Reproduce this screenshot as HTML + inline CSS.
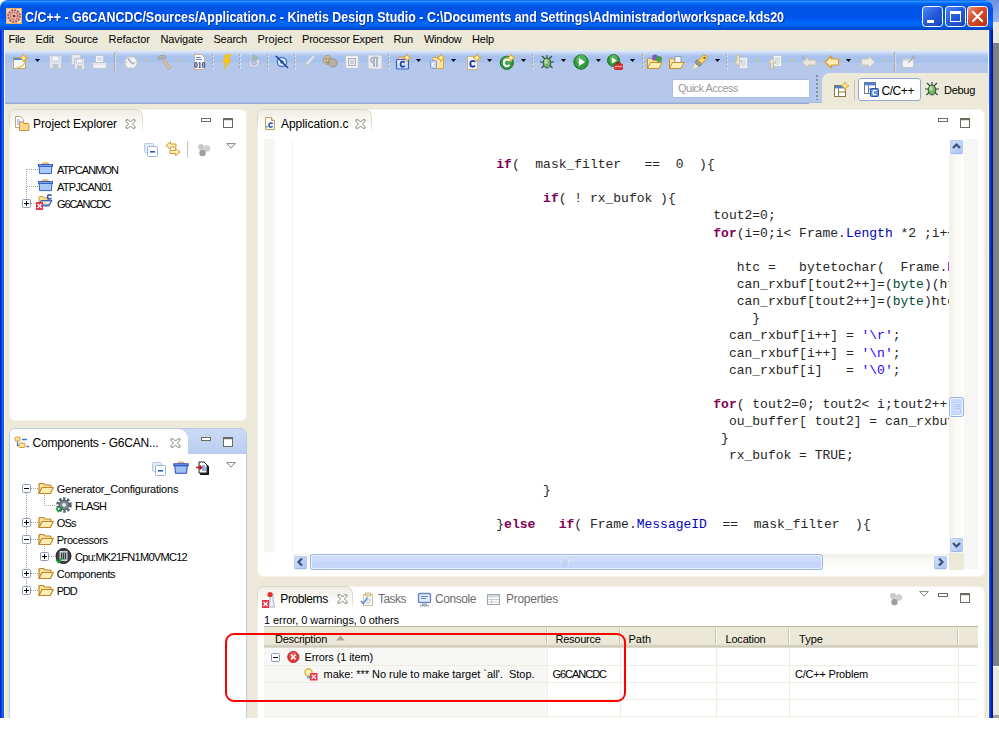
<!DOCTYPE html>
<html lang="en"><head><meta charset="utf-8"><title>C/C++ - G6CANCDC/Sources/Application.c - Kinetis Design Studio</title>
<style>
html,body{margin:0;padding:0;background:#fff;}
#root{position:relative;width:999px;height:731px;overflow:hidden;background:#fff;}
#root div, #root svg, #root span{position:absolute;}
.t{white-space:pre;}
.panel{background:#fff;border:1px solid #f4f2ea;border-radius:6px;box-sizing:border-box;}

</style></head>
<body>
<div id="root">
<div style="left:984px;top:0px;width:15px;height:22px;background:linear-gradient(#6f8fe0,#9db4ea)"></div>
<div style="left:993px;top:22px;width:6px;height:21px;background:#ece9d8"></div>
<div style="left:993px;top:43px;width:6px;height:623px;background:#808080"></div>
<div style="left:993px;top:666px;width:6px;height:49px;background:#ece9d8;border-top:1px solid #fff"></div>
<div style="left:993px;top:715px;width:6px;height:3px;background:#a0a0a0"></div>
<div style="left:0px;top:0px;width:993px;height:718px;background:#ece9d8;border-radius:8px 8px 0 0"></div>
<div style="left:0px;top:30px;width:4px;height:688px;background:linear-gradient(90deg,#0019cf,#0831d9 30%,#166aee 60%,#0855dd)"></div>
<div style="left:989px;top:30px;width:4px;height:688px;background:linear-gradient(90deg,#2a6af0,#0838e0 35%,#0020b0 65%,#001088)"></div>
<div style="left:0px;top:0px;width:993px;height:30px;border-radius:8px 8px 0 0;background:linear-gradient(180deg,#0058ee 0%,#3593ff 4%,#288eff 6%,#127dff 8%,#036ffc 10%,#0262ee 14%,#0057e5 20%,#0054e3 24%,#0055eb 56%,#005bf5 66%,#026afe 76%,#0062ef 86%,#0052d6 92%,#004ccc 96%,#0044be 100%)"></div>
<svg style="left:6px;top:8px;" width="16" height="16" viewBox="0 0 16 16"><rect width="16" height="16" fill="#f0b060"/><rect x="1" y="1" width="14" height="14" fill="#ecd8c4"/><circle cx="8" cy="8" r="6.6" fill="#d8a8a0"/><circle cx="8" cy="8" r="6" fill="none" stroke="#a84848" stroke-width="1.6" stroke-dasharray="1.6 1.5"/><circle cx="8" cy="8" r="3.4" fill="#e8d0c0" stroke="#b85050" stroke-width="1.4" stroke-dasharray="1.2 1"/><circle cx="8" cy="8" r="1.5" fill="#8c2c2c"/></svg>
<svg style="left:0;top:0" width="0" height="0"><defs><linearGradient id="gb" x1="0" y1="0" x2="1" y2="1"><stop offset="0" stop-color="#4f8df8"/><stop offset="0.5" stop-color="#2459d8"/><stop offset="1" stop-color="#1a46c0"/></linearGradient><linearGradient id="sbg" x1="0" y1="0" x2="1" y2="1"><stop offset="0" stop-color="#d2dffc"/><stop offset="1" stop-color="#aec3f4"/></linearGradient><linearGradient id="gr" x1="0" y1="0" x2="1" y2="1"><stop offset="0" stop-color="#f0a088"/><stop offset="0.4" stop-color="#d8502c"/><stop offset="1" stop-color="#b83010"/></linearGradient></defs></svg>
<svg style="left:922px;top:5.7px;" width="21" height="21" viewBox="0 0 21 21"><rect x="0.5" y="0.5" width="20" height="20" rx="3" fill="url(#gb)" stroke="#fff" stroke-width="1"/><rect x="5" y="14" width="7" height="3" fill="#fff"/></svg>
<svg style="left:945px;top:5.7px;" width="21" height="21" viewBox="0 0 21 21"><rect x="0.5" y="0.5" width="20" height="20" rx="3" fill="url(#gb)" stroke="#fff" stroke-width="1"/><rect x="5.5" y="5.5" width="10" height="10" fill="none" stroke="#fff" stroke-width="1"/><rect x="5" y="5" width="11" height="3" fill="#fff"/></svg>
<svg style="left:967px;top:5.7px;" width="21" height="21" viewBox="0 0 21 21"><rect x="0.5" y="0.5" width="20" height="20" rx="3" fill="url(#gr)" stroke="#fff" stroke-width="1"/><path d="M6 6 L15 15 M15 6 L6 15" stroke="#fff" stroke-width="2.2" stroke-linecap="round"/></svg>
<div style="left:4px;top:30px;width:985px;height:20px;background:#ece9d8"></div>
<div style="left:5px;top:50px;width:984px;height:54px;background:linear-gradient(180deg,#e6edf9 0px,#c8d8f3 3px,#a9c3ee 6px,#a7c1ed 12px,#b5c8ec 13px,#b5c8ec 52px,#97add9 53px,#8fa6d4 54px)"></div>
<div style="left:988px;top:30px;width:1px;height:688px;background:#fffbe0"></div>
<div style="left:4px;top:30px;width:1px;height:688px;background:#fffbe0"></div>
<div style="left:822px;top:73px;width:167px;height:31px;background:#ece9d8;border-radius:8px 0 0 0"></div>
<div style="left:809px;top:103px;width:14px;height:1px;background:#ece9d8"></div>
<div style="left:9px;top:109px;width:238px;height:312px;"></div>
<div class="panel" style="left:9px;top:109px;width:238px;height:312px"></div>
<div style="left:9px;top:109px;width:134px;height:27px;border:1px solid #dad7ca;border-bottom:none;border-radius:6px 7px 0 0;box-sizing:border-box;background:linear-gradient(180deg,#efede3 0,#f8f7f1 10px,#fff 24px);-webkit-mask-image:linear-gradient(180deg,#000 0,#000 11px,transparent 26px);mask-image:linear-gradient(180deg,#000 0,#000 11px,transparent 26px)"></div>
<svg style="left:14px;top:116px;" width="16" height="16" viewBox="0 0 16 16"><path d="M1.5 0.5 L6.5 0.5 L9.5 3.5 L9.5 11.5 L1.5 11.5 Z" fill="#fff" stroke="#b8a878"/><path d="M3 4h3M3 6h4M3 8h3" stroke="#7ba0d8" stroke-width="1"/><path d="M5.5 14.5 L5.5 7 Q5.5 6 6.5 6 L9 6 L10 7.5 L14 7.5 Q15 7.5 15 8.5 L15 14.5 Z" fill="#fbd98a" stroke="#cf8e3a"/></svg>
<svg style="left:125px;top:119px;" width="11" height="10" viewBox="0 0 11 10"><path d="M1 0.8 L3.3 0.8 L5.5 3.1 L7.7 0.8 L10 0.8 L10 2.2 L7.4 4.9 L10 7.6 L10 9.2 L7.7 9.2 L5.5 6.9 L3.3 9.2 L1 9.2 L1 7.6 L3.6 4.9 L1 2.2 Z" fill="#fff" stroke="#77776c" stroke-width="0.9"/></svg>
<svg style="left:201px;top:118px;" width="10" height="4" viewBox="0 0 10 4"><rect x="0.5" y="0.5" width="9" height="3" fill="#fff" stroke="#6b6b60" stroke-width="1"/></svg>
<svg style="left:223px;top:118px;" width="10" height="10" viewBox="0 0 10 10"><rect x="0.5" y="0.5" width="9" height="9" fill="#fff" stroke="#6b6b60" stroke-width="1"/><rect x="0.5" y="1" width="9" height="1.2" fill="#6b6b60" stroke="none"/></svg>
<svg style="left:144px;top:143px;" width="14" height="14" viewBox="0 0 14 14"><rect x="0.5" y="0.5" width="9" height="9" rx="1" fill="#e4ecf8" stroke="#b7c8e4"/><rect x="3.5" y="3.5" width="10" height="10" rx="1" fill="#fff" stroke="#9db4dc"/><rect x="6" y="8" width="5" height="1.6" fill="#2c5fb8"/></svg>
<svg style="left:165px;top:141px;" width="16" height="16" viewBox="0 0 16 16"><path d="M0.8 4.5 L5.5 0.8 L5.5 3 L11 3 L11 6 L5.5 6 L5.5 8.2 Z" fill="#fdf0c0" stroke="#d39a2a" stroke-width="1" stroke-linejoin="round"/><path d="M15.2 11 L10.5 7.3 L10.5 9.5 L5 9.5 L5 12.5 L10.5 12.5 L10.5 14.7 Z" fill="#fdf0c0" stroke="#d39a2a" stroke-width="1" stroke-linejoin="round"/></svg>
<div style="left:187px;top:141px;width:1px;height:17px;background:#c9c5b5"></div>
<svg style="left:197px;top:143px;" width="14" height="14" viewBox="0 0 14 14"><circle cx="4" cy="4" r="3" fill="#c9c9c9"/><circle cx="10" cy="5.5" r="3.2" fill="#cfcfcf"/><circle cx="5.5" cy="10" r="3.2" fill="#9e9e9e"/></svg>
<svg style="left:226px;top:143px;" width="10" height="6" viewBox="0 0 10 6"><path d="M0.7 0.6 L9.3 0.6 L5 5.2 Z" fill="#fff" stroke="#77776c" stroke-width="0.9"/></svg>
<div style="left:26px;top:169px;width:1px;height:30px;background:repeating-linear-gradient(180deg,#aaa79a 0 1px,transparent 1px 2px)"></div>
<div style="left:27px;top:169px;width:11px;height:1px;background:repeating-linear-gradient(90deg,#aaa79a 0 1px,transparent 1px 2px)"></div>
<div style="left:27px;top:186px;width:11px;height:1px;background:repeating-linear-gradient(90deg,#aaa79a 0 1px,transparent 1px 2px)"></div>
<div style="left:31px;top:203px;width:7px;height:1px;background:repeating-linear-gradient(90deg,#aaa79a 0 1px,transparent 1px 2px)"></div>
<svg style="left:38px;top:162px;" width="15" height="13" viewBox="0 0 15 13"><path d="M4 3 L5 1 L10 1 L11 3" fill="#f8d9a0" stroke="#d59a4a" stroke-width="1"/><rect x="0.5" y="2.5" width="14" height="2" fill="#7ea3dd" stroke="#3c62b5" stroke-width="1"/><path d="M1.2 4.5 L13.8 4.5 L13.5 11.6 L1.5 11.6 Z" fill="#a9c8f4" stroke="#3460cc" stroke-width="1"/></svg>
<svg style="left:38px;top:179px;" width="15" height="13" viewBox="0 0 15 13"><path d="M4 3 L5 1 L10 1 L11 3" fill="#f8d9a0" stroke="#d59a4a" stroke-width="1"/><rect x="0.5" y="2.5" width="14" height="2" fill="#7ea3dd" stroke="#3c62b5" stroke-width="1"/><path d="M1.2 4.5 L13.8 4.5 L13.5 11.6 L1.5 11.6 Z" fill="#a9c8f4" stroke="#3460cc" stroke-width="1"/></svg>
<svg style="left:22px;top:199px;" width="9" height="9" viewBox="0 0 9 9"><rect x="0.5" y="0.5" width="8" height="8" rx="1" fill="#fff" stroke="#8b9cb8" stroke-width="1"/><rect x="2" y="4" width="5" height="1" fill="#000"/><rect x="4" y="2" width="1" height="5" fill="#000"/></svg>
<svg style="left:36px;top:194px;" width="18" height="16" viewBox="0 0 18 16"><path d="M3 9 L3 3.5 Q3 2.5 4 2.5 L7 2.5 L8 4 L12 4 L12 6" fill="#fbe3a0" stroke="#d39a3a"/><path d="M2 12 L5 6.5 L16 6.5 L13 12 Z" fill="#6f9be0" stroke="#3c62b5"/><path d="M4 10 L6 7.5 L14.5 7.5 L12.5 10Z" fill="#fdf0c0"/><rect x="0" y="8" width="7" height="8" fill="#e8344a"/><path d="M1.5 10 L5.5 14 M5.5 10 L1.5 14" stroke="#fff" stroke-width="1.3"/><path d="M15.5 1.8 Q14.8 0.8 13.5 0.8 Q11.6 0.8 11.6 2.9 Q11.6 5 13.5 5 Q14.8 5 15.5 4" fill="none" stroke="#2f55b0" stroke-width="1.5"/></svg>
<div class="panel" style="left:9px;top:428px;width:238px;height:296px;border-color:#b9cbea;background:#fff"></div>
<div style="left:180px;top:429px;width:66px;height:25px;border-radius:0 5px 0 0;background:linear-gradient(180deg,#c9daf4,#b9ceef)"></div>
<div style="left:10px;top:429px;width:178px;height:26px;border-radius:5px 10px 0 0;background:#fff"></div>
<div style="left:10px;top:454px;width:236px;height:1px;background:#fff"></div>
<svg style="left:14px;top:436px;" width="16" height="13" viewBox="0 0 16 13"><rect x="1" y="1" width="5" height="4" rx="1" fill="#fbe4a0" stroke="#d39a3a"/><rect x="5" y="7" width="6" height="4.5" rx="1" fill="#fbe4a0" stroke="#d39a3a"/><path d="M3.5 5.5 L3.5 9.5 L5 9.5" fill="none" stroke="#3a78c0" stroke-width="1.2"/><path d="M8 3.5 L13 3.5 M12.5 10.5 L15 10.5" stroke="#3a78c0" stroke-width="1.4"/></svg>
<svg style="left:170px;top:438px;" width="11" height="10" viewBox="0 0 11 10"><path d="M1 0.8 L3.3 0.8 L5.5 3.1 L7.7 0.8 L10 0.8 L10 2.2 L7.4 4.9 L10 7.6 L10 9.2 L7.7 9.2 L5.5 6.9 L3.3 9.2 L1 9.2 L1 7.6 L3.6 4.9 L1 2.2 Z" fill="#fff" stroke="#77776c" stroke-width="0.9"/></svg>
<svg style="left:201px;top:437px;" width="10" height="4" viewBox="0 0 10 4"><rect x="0.5" y="0.5" width="9" height="3" fill="#fff" stroke="#6b6b60" stroke-width="1"/></svg>
<svg style="left:223px;top:437px;" width="10" height="10" viewBox="0 0 10 10"><rect x="0.5" y="0.5" width="9" height="9" fill="#fff" stroke="#6b6b60" stroke-width="1"/><rect x="0.5" y="1" width="9" height="1.2" fill="#6b6b60" stroke="none"/></svg>
<svg style="left:152px;top:462px;" width="14" height="14" viewBox="0 0 14 14"><rect x="0.5" y="0.5" width="9" height="9" rx="1" fill="#e4ecf8" stroke="#b7c8e4"/><rect x="3.5" y="3.5" width="10" height="10" rx="1" fill="#fff" stroke="#9db4dc"/><rect x="6" y="8" width="5" height="1.6" fill="#2c5fb8"/></svg>
<svg style="left:173px;top:461px;" width="16" height="14" viewBox="0 0 16 14"><path d="M4.5 3 L5.5 1.2 L10.5 1.2 L11.5 3" fill="#f8d9a0" stroke="#d59a4a" stroke-width="1"/><rect x="0.8" y="2.8" width="14.4" height="2" fill="#7ea3dd" stroke="#2a48c8" stroke-width="1"/><path d="M1.8 4.8 L14.2 4.8 L13.6 12.3 L2.4 12.3 Z" fill="#9dc0f0" stroke="#2a48c8" stroke-width="1"/></svg>
<svg style="left:196px;top:461px;" width="14" height="15" viewBox="0 0 14 15"><path d="M4.5 2.5 L9.5 2.5 L12.5 5.5 L12.5 13.5 L4.5 13.5 Z" fill="#222" stroke="#111"/><path d="M3 1 L8 1 L11 4 L11 12 L3 12 Z" fill="#fff" stroke="#222"/><path d="M6 5h3M6 7h4M6 9h4" stroke="#3a60d0" stroke-width="1"/><path d="M0 6.5 L5.5 6.5 M3.5 4.5 L5.8 6.5 L3.5 8.5" stroke="#c01020" stroke-width="1.4" fill="none"/></svg>
<svg style="left:226px;top:461.5px;" width="10" height="6" viewBox="0 0 10 6"><path d="M0.7 0.6 L9.3 0.6 L5 5.2 Z" fill="#fff" stroke="#77776c" stroke-width="0.9"/></svg>
<div style="left:26px;top:493px;width:1px;height:99px;background:repeating-linear-gradient(180deg,#aaa79a 0 1px,transparent 1px 2px)"></div>
<svg style="left:22px;top:484px;" width="9" height="9" viewBox="0 0 9 9"><rect x="0.5" y="0.5" width="8" height="8" rx="1" fill="#fff" stroke="#8b9cb8" stroke-width="1"/><rect x="2" y="4" width="5" height="1" fill="#000"/></svg>
<div style="left:31px;top:488px;width:7px;height:1px;background:repeating-linear-gradient(90deg,#aaa79a 0 1px,transparent 1px 2px)"></div>
<svg style="left:37.5px;top:481.5px;" width="16" height="13" viewBox="0 0 16 13"><path d="M1 11.5 L1 2.5 Q1 1.5 2 1.5 L5.5 1.5 L7 3 L12 3 Q13 3 13 4 L13 5" fill="#fbe3a0" stroke="#bf8526" stroke-width="1.2"/><path d="M1 11.5 L4 5.5 L15.3 5.5 L12.3 11.5 Z" fill="#fdeeb6" stroke="#bf8526" stroke-width="1.2" stroke-linejoin="round"/></svg>
<div style="left:44px;top:495px;width:1px;height:11px;background:repeating-linear-gradient(180deg,#aaa79a 0 1px,transparent 1px 2px)"></div>
<div style="left:44px;top:505px;width:11px;height:1px;background:repeating-linear-gradient(90deg,#aaa79a 0 1px,transparent 1px 2px)"></div>
<svg style="left:55px;top:497px;" width="17" height="16" viewBox="0 0 17 16"><circle cx="9" cy="8" r="6.3" fill="none" stroke="#5a6270" stroke-width="3" stroke-dasharray="2.4 1.6"/><circle cx="9" cy="8" r="4.8" fill="#7d8694" stroke="#4a5260"/><circle cx="9" cy="8" r="2" fill="#e8eaee"/><path d="M1 11.5 L3.5 14.5 L7.5 9.5" fill="none" stroke="#18a030" stroke-width="1.6"/></svg>
<svg style="left:22px;top:518px;" width="9" height="9" viewBox="0 0 9 9"><rect x="0.5" y="0.5" width="8" height="8" rx="1" fill="#fff" stroke="#8b9cb8" stroke-width="1"/><rect x="2" y="4" width="5" height="1" fill="#000"/><rect x="4" y="2" width="1" height="5" fill="#000"/></svg>
<div style="left:31px;top:522px;width:7px;height:1px;background:repeating-linear-gradient(90deg,#aaa79a 0 1px,transparent 1px 2px)"></div>
<svg style="left:37.5px;top:515.5px;" width="16" height="13" viewBox="0 0 16 13"><path d="M1 11.5 L1 2.5 Q1 1.5 2 1.5 L5.5 1.5 L7 3 L12 3 Q13 3 13 4 L13 5" fill="#fbe3a0" stroke="#bf8526" stroke-width="1.2"/><path d="M1 11.5 L4 5.5 L15.3 5.5 L12.3 11.5 Z" fill="#fdeeb6" stroke="#bf8526" stroke-width="1.2" stroke-linejoin="round"/></svg>
<svg style="left:22px;top:535px;" width="9" height="9" viewBox="0 0 9 9"><rect x="0.5" y="0.5" width="8" height="8" rx="1" fill="#fff" stroke="#8b9cb8" stroke-width="1"/><rect x="2" y="4" width="5" height="1" fill="#000"/></svg>
<div style="left:31px;top:539px;width:7px;height:1px;background:repeating-linear-gradient(90deg,#aaa79a 0 1px,transparent 1px 2px)"></div>
<svg style="left:37.5px;top:532.5px;" width="16" height="13" viewBox="0 0 16 13"><path d="M1 11.5 L1 2.5 Q1 1.5 2 1.5 L5.5 1.5 L7 3 L12 3 Q13 3 13 4 L13 5" fill="#fbe3a0" stroke="#bf8526" stroke-width="1.2"/><path d="M1 11.5 L4 5.5 L15.3 5.5 L12.3 11.5 Z" fill="#fdeeb6" stroke="#bf8526" stroke-width="1.2" stroke-linejoin="round"/></svg>
<svg style="left:40px;top:552px;" width="9" height="9" viewBox="0 0 9 9"><rect x="0.5" y="0.5" width="8" height="8" rx="1" fill="#fff" stroke="#8b9cb8" stroke-width="1"/><rect x="2" y="4" width="5" height="1" fill="#000"/><rect x="4" y="2" width="1" height="5" fill="#000"/></svg>
<div style="left:49px;top:556px;width:6px;height:1px;background:repeating-linear-gradient(90deg,#aaa79a 0 1px,transparent 1px 2px)"></div>
<div style="left:44px;top:546px;width:1px;height:6px;background:repeating-linear-gradient(180deg,#aaa79a 0 1px,transparent 1px 2px)"></div>
<svg style="left:55px;top:548px;" width="17" height="16" viewBox="0 0 17 16"><circle cx="8.5" cy="8" r="7.5" fill="#3a3f45" stroke="#1c1f22"/><rect x="5" y="3.5" width="7" height="9" fill="#9aa0a8" stroke="#e8e8e8" stroke-width="0.8"/><path d="M6.5 5 v6 M8.5 5 v6 M10.5 5 v6" stroke="#222" stroke-width="0.8"/><path d="M1 11.5 L3.5 14.5 L7.5 9.5" fill="none" stroke="#18a030" stroke-width="1.6"/></svg>
<svg style="left:22px;top:569px;" width="9" height="9" viewBox="0 0 9 9"><rect x="0.5" y="0.5" width="8" height="8" rx="1" fill="#fff" stroke="#8b9cb8" stroke-width="1"/><rect x="2" y="4" width="5" height="1" fill="#000"/><rect x="4" y="2" width="1" height="5" fill="#000"/></svg>
<div style="left:31px;top:573px;width:7px;height:1px;background:repeating-linear-gradient(90deg,#aaa79a 0 1px,transparent 1px 2px)"></div>
<svg style="left:37.5px;top:566.5px;" width="16" height="13" viewBox="0 0 16 13"><path d="M1 11.5 L1 2.5 Q1 1.5 2 1.5 L5.5 1.5 L7 3 L12 3 Q13 3 13 4 L13 5" fill="#fbe3a0" stroke="#bf8526" stroke-width="1.2"/><path d="M1 11.5 L4 5.5 L15.3 5.5 L12.3 11.5 Z" fill="#fdeeb6" stroke="#bf8526" stroke-width="1.2" stroke-linejoin="round"/></svg>
<svg style="left:22px;top:586px;" width="9" height="9" viewBox="0 0 9 9"><rect x="0.5" y="0.5" width="8" height="8" rx="1" fill="#fff" stroke="#8b9cb8" stroke-width="1"/><rect x="2" y="4" width="5" height="1" fill="#000"/><rect x="4" y="2" width="1" height="5" fill="#000"/></svg>
<div style="left:31px;top:590px;width:7px;height:1px;background:repeating-linear-gradient(90deg,#aaa79a 0 1px,transparent 1px 2px)"></div>
<svg style="left:37.5px;top:583.5px;" width="16" height="13" viewBox="0 0 16 13"><path d="M1 11.5 L1 2.5 Q1 1.5 2 1.5 L5.5 1.5 L7 3 L12 3 Q13 3 13 4 L13 5" fill="#fbe3a0" stroke="#bf8526" stroke-width="1.2"/><path d="M1 11.5 L4 5.5 L15.3 5.5 L12.3 11.5 Z" fill="#fdeeb6" stroke="#bf8526" stroke-width="1.2" stroke-linejoin="round"/></svg>
<div class="panel" style="left:257px;top:109px;width:728px;height:468px"></div>
<div style="left:257px;top:109px;width:115px;height:27px;border:1px solid #dad7ca;border-bottom:none;border-radius:6px 7px 0 0;box-sizing:border-box;background:linear-gradient(180deg,#efede3 0,#f8f7f1 10px,#fff 24px);-webkit-mask-image:linear-gradient(180deg,#000 0,#000 11px,transparent 26px);mask-image:linear-gradient(180deg,#000 0,#000 11px,transparent 26px)"></div>
<svg style="left:264px;top:116px;" width="12" height="15" viewBox="0 0 12 15"><path d="M1.5 1.5 L7.5 1.5 L10.5 4.5 L10.5 13.5 L1.5 13.5 Z" fill="#fffef6" stroke="#c0a060"/><path d="M7.5 1.5 L7.5 4.5 L10.5 4.5" fill="#f4e6b8" stroke="#c0a060"/><path d="M8.6 8 Q8 7 6.8 7 Q5 7 5 9.1 Q5 11.2 6.8 11.2 Q8 11.2 8.6 10.2" fill="none" stroke="#2c5cc0" stroke-width="1.6"/><rect x="2.3" y="10" width="1.4" height="1.4" fill="#2c5cc0"/></svg>
<svg style="left:355px;top:119px;" width="11" height="10" viewBox="0 0 11 10"><path d="M1 0.8 L3.3 0.8 L5.5 3.1 L7.7 0.8 L10 0.8 L10 2.2 L7.4 4.9 L10 7.6 L10 9.2 L7.7 9.2 L5.5 6.9 L3.3 9.2 L1 9.2 L1 7.6 L3.6 4.9 L1 2.2 Z" fill="#fff" stroke="#77776c" stroke-width="0.9"/></svg>
<svg style="left:938px;top:118px;" width="10" height="4" viewBox="0 0 10 4"><rect x="0.5" y="0.5" width="9" height="3" fill="#fff" stroke="#6b6b60" stroke-width="1"/></svg>
<svg style="left:960px;top:118px;" width="10" height="10" viewBox="0 0 10 10"><rect x="0.5" y="0.5" width="9" height="9" fill="#fff" stroke="#6b6b60" stroke-width="1"/><rect x="0.5" y="1" width="9" height="1.2" fill="#6b6b60" stroke="none"/></svg>
<div style="left:264px;top:139px;width:11px;height:413px;background:#f5f5f3"></div>
<div style="left:292px;top:139px;width:1px;height:413px;background:#f4f3ee"></div>
<div style="left:964px;top:139px;width:14px;height:430px;background:#f6f6f5"></div>
<div style="left:949px;top:139px;width:15px;height:414px;background:linear-gradient(90deg,#f0efe8,#fbfaf5 50%,#fefefb)"></div>
<svg style="left:949px;top:139px;" width="15" height="16" viewBox="0 0 15 16"><rect x="0.5" y="0.5" width="14" height="15" rx="2" fill="#c3d4f7" stroke="#fff"/><rect x="1.5" y="1.5" width="12" height="13" rx="1.5" fill="url(#sbg)" stroke="#b4c8f2" stroke-width="0.8"/><rect x="2" y="14.2" width="11" height="1" fill="#9ab4e8"/><path d="M3.5 8.5 L7 5 L10.5 8.5" transform="translate(0.5,0.5)" fill="none" stroke="#3f5078" stroke-width="2.2"/></svg>
<svg style="left:949px;top:537px;" width="15" height="16" viewBox="0 0 15 16"><rect x="0.5" y="0.5" width="14" height="15" rx="2" fill="#c3d4f7" stroke="#fff"/><rect x="1.5" y="1.5" width="12" height="13" rx="1.5" fill="url(#sbg)" stroke="#b4c8f2" stroke-width="0.8"/><rect x="2" y="14.2" width="11" height="1" fill="#9ab4e8"/><path d="M3.5 5.5 L7 9 L10.5 5.5" transform="translate(0.5,0.5)" fill="none" stroke="#3f5078" stroke-width="2.2"/></svg>
<svg style="left:949px;top:397px;" width="15" height="20" viewBox="0 0 15 20"><rect x="0.5" y="0.5" width="14" height="19" rx="2" fill="#c6d7fb" stroke="#98b1e4"/><rect x="1.5" y="1.5" width="12" height="17" rx="1.5" fill="none" stroke="#fff" stroke-width="0.8"/><path d="M4.5 7 h6 M4.5 9 h6 M4.5 11 h6 M4.5 13 h6" stroke="#eef4fe" stroke-width="1"/><path d="M5 7.8 h6 M5 9.8 h6 M5 11.8 h6" stroke="#8ea6dc" stroke-width="0.6"/></svg>
<div style="left:293px;top:554px;width:656px;height:16px;background:linear-gradient(180deg,#f0efe8,#fbfaf5 50%,#fefefb)"></div>
<svg style="left:293px;top:554.5px;" width="15" height="15" viewBox="0 0 15 15"><rect x="0.5" y="0.5" width="14" height="14" rx="2" fill="#c3d4f7" stroke="#fff"/><rect x="1.5" y="1.5" width="12" height="12" rx="1.5" fill="url(#sbg)" stroke="#b4c8f2" stroke-width="0.8"/><rect x="2" y="13.2" width="11" height="1" fill="#9ab4e8"/><path d="M8.5 3.5 L5 7 L8.5 10.5" transform="translate(0.5,0)" fill="none" stroke="#3f5078" stroke-width="2.2"/></svg>
<svg style="left:932.5px;top:554.5px;" width="15" height="15" viewBox="0 0 15 15"><rect x="0.5" y="0.5" width="14" height="14" rx="2" fill="#c3d4f7" stroke="#fff"/><rect x="1.5" y="1.5" width="12" height="12" rx="1.5" fill="url(#sbg)" stroke="#b4c8f2" stroke-width="0.8"/><rect x="2" y="13.2" width="11" height="1" fill="#9ab4e8"/><path d="M5.5 3.5 L9 7 L5.5 10.5" transform="translate(0.5,0)" fill="none" stroke="#3f5078" stroke-width="2.2"/></svg>
<svg style="left:310px;top:554px;" width="513" height="16" viewBox="0 0 513 16"><rect x="0.5" y="0.5" width="512" height="15" rx="2" fill="#c4d5fa" stroke="#9cb3e6"/><rect x="1.5" y="1.5" width="510" height="6" rx="1.5" fill="#cddcfc"/><rect x="1.5" y="1.5" width="510" height="13" rx="1.5" fill="none" stroke="#fff" stroke-width="0.8" opacity=".8"/><path d="M252 4.5 v7 M254 4.5 v7 M256 4.5 v7 M258 4.5 v7" stroke="#eef4fe" stroke-width="1"/><path d="M253 5 v7 M255 5 v7 M257 5 v7" stroke="#8ea6dc" stroke-width="0.6"/></svg>
<div style="left:949px;top:553px;width:15px;height:17px;background:#ece9d8"></div>
<div class="panel" style="left:257px;top:586px;width:728px;height:150px"></div>
<div style="left:257px;top:586px;width:96px;height:27px;border:1px solid #dad7ca;border-bottom:none;border-radius:6px 7px 0 0;box-sizing:border-box;background:linear-gradient(180deg,#efede3 0,#f8f7f1 10px,#fff 24px);-webkit-mask-image:linear-gradient(180deg,#000 0,#000 11px,transparent 26px);mask-image:linear-gradient(180deg,#000 0,#000 11px,transparent 26px)"></div>
<svg style="left:262px;top:591px;" width="15" height="18" viewBox="0 0 15 18"><path d="M8 3 L11 3 L11 9 L12.5 16 L6.5 16 L8 9 Z" fill="#eef2fa" stroke="#9aa8c8" stroke-width="0.9"/><circle cx="8" cy="3.5" r="2.6" fill="#e03030"/><rect x="0" y="9" width="7" height="8" fill="#e8344a"/><path d="M1.5 11 L5.5 15 M5.5 11 L1.5 15" stroke="#fff" stroke-width="1.3"/></svg>
<svg style="left:337px;top:594px;" width="11" height="10" viewBox="0 0 11 10"><path d="M1 0.8 L3.3 0.8 L5.5 3.1 L7.7 0.8 L10 0.8 L10 2.2 L7.4 4.9 L10 7.6 L10 9.2 L7.7 9.2 L5.5 6.9 L3.3 9.2 L1 9.2 L1 7.6 L3.6 4.9 L1 2.2 Z" fill="#fff" stroke="#77776c" stroke-width="0.9"/></svg>
<svg style="left:360px;top:592px;opacity:.8" width="14" height="15" viewBox="0 0 14 15"><rect x="3.5" y="2.5" width="9" height="11" fill="#fdfdfd" stroke="#c8b080"/><rect x="5.5" y="1" width="5" height="3" fill="#e8d8a8" stroke="#b89858" stroke-width="0.8"/><path d="M6 7h5M6 9h5M6 11h4" stroke="#b0b8c8" stroke-width="1"/><path d="M0.8 9 L3.2 11.8 L7.5 5.5" fill="none" stroke="#3a78d0" stroke-width="1.6"/></svg>
<svg style="left:417px;top:592px;opacity:.8" width="15" height="15" viewBox="0 0 15 15"><rect x="1.5" y="1.5" width="12" height="9" rx="1" fill="#dfe8fa" stroke="#4468b8" stroke-width="1.4"/><path d="M4 4.5h7M4 6.5h5" stroke="#4468b8" stroke-width="1"/><rect x="5" y="11.5" width="5" height="1.6" fill="#8c98b0"/><rect x="3" y="13" width="9" height="1.5" fill="#8c98b0"/></svg>
<svg style="left:487px;top:594px;opacity:.8" width="14" height="12" viewBox="0 0 14 12"><rect x="0.5" y="0.5" width="12" height="10" fill="#fff" stroke="#8890a0"/><rect x="1" y="1" width="11" height="2.4" fill="#c8d0e0"/><path d="M1 5.5h11M1 8h11M4.5 3.5v7" stroke="#b0b8c8" stroke-width="0.9"/></svg>
<svg style="left:889px;top:592px;" width="14" height="14" viewBox="0 0 14 14"><circle cx="4" cy="4" r="3" fill="#c9c9c9"/><circle cx="10" cy="5.5" r="3.2" fill="#cfcfcf"/><circle cx="5.5" cy="10" r="3.2" fill="#9e9e9e"/></svg>
<svg style="left:919px;top:591px;" width="10" height="6" viewBox="0 0 10 6"><path d="M0.7 0.6 L9.3 0.6 L5 5.2 Z" fill="#fff" stroke="#77776c" stroke-width="0.9"/></svg>
<svg style="left:938px;top:593px;" width="10" height="4" viewBox="0 0 10 4"><rect x="0.5" y="0.5" width="9" height="3" fill="#fff" stroke="#6b6b60" stroke-width="1"/></svg>
<svg style="left:960px;top:593px;" width="10" height="10" viewBox="0 0 10 10"><rect x="0.5" y="0.5" width="9" height="9" fill="#fff" stroke="#6b6b60" stroke-width="1"/><rect x="0.5" y="1" width="9" height="1.2" fill="#6b6b60" stroke="none"/></svg>
<div style="left:264px;top:626px;width:714px;height:1px;background:#b8b4a2"></div>
<div style="left:264px;top:627px;width:714px;height:21px;background:linear-gradient(180deg,#ebe8d7 0,#ece9d8 16px,#e0dccb 18px,#d4d0be 19px,#c8c4b2 20px,#f4f3ee 21px)"></div>
<div style="left:264px;top:648px;width:283px;height:70px;background:#f7f7f6"></div>
<div style="left:264px;top:665px;width:714px;height:1px;background:#f0eee2"></div>
<div style="left:264px;top:682px;width:714px;height:1px;background:#f0eee2"></div>
<div style="left:264px;top:699px;width:714px;height:1px;background:#f0eee2"></div>
<div style="left:264px;top:716px;width:714px;height:1px;background:#f0eee2"></div>
<div style="left:547px;top:648px;width:1px;height:70px;background:#f0eee2"></div>
<div style="left:546px;top:629px;width:1px;height:15px;background:#c5c2b2"></div>
<div style="left:547px;top:629px;width:1px;height:15px;background:#fff"></div>
<div style="left:620px;top:648px;width:1px;height:70px;background:#f0eee2"></div>
<div style="left:619px;top:629px;width:1px;height:15px;background:#c5c2b2"></div>
<div style="left:620px;top:629px;width:1px;height:15px;background:#fff"></div>
<div style="left:716px;top:648px;width:1px;height:70px;background:#f0eee2"></div>
<div style="left:715px;top:629px;width:1px;height:15px;background:#c5c2b2"></div>
<div style="left:716px;top:629px;width:1px;height:15px;background:#fff"></div>
<div style="left:789px;top:648px;width:1px;height:70px;background:#f0eee2"></div>
<div style="left:788px;top:629px;width:1px;height:15px;background:#c5c2b2"></div>
<div style="left:789px;top:629px;width:1px;height:15px;background:#fff"></div>
<div style="left:958px;top:648px;width:1px;height:70px;background:#f0eee2"></div>
<div style="left:957px;top:629px;width:1px;height:15px;background:#c5c2b2"></div>
<div style="left:958px;top:629px;width:1px;height:15px;background:#fff"></div>
<svg style="left:336px;top:635px;" width="9" height="6" viewBox="0 0 9 6"><path d="M0 5.5 L4.5 0.5 L9 5.5 Z" fill="#aca899"/></svg>
<svg style="left:271px;top:653px;" width="9" height="9" viewBox="0 0 9 9"><rect x="0.5" y="0.5" width="8" height="8" rx="1" fill="#fff" stroke="#8b9cb8" stroke-width="1"/><rect x="2" y="4" width="5" height="1" fill="#000"/></svg>
<svg style="left:287px;top:651px;" width="13" height="12" viewBox="0 0 13 12"><circle cx="6.3" cy="6" r="5.6" fill="#e03a3a" stroke="#b01818" stroke-width="0.8"/><circle cx="6.3" cy="4.5" r="3.6" fill="#f06a60" opacity=".6"/><path d="M4 3.6 L8.6 8.4 M8.6 3.6 L4 8.4" stroke="#fff" stroke-width="1.5"/></svg>
<svg style="left:304px;top:668px;" width="14" height="13" viewBox="0 0 14 13"><circle cx="4.5" cy="4.5" r="3.6" fill="#fff6c0" stroke="#d8a020" stroke-width="1.1"/><rect x="3.2" y="8" width="2.8" height="2.6" fill="#8898b8"/><rect x="6" y="5" width="7.5" height="7.5" fill="#e8344a"/><path d="M7.6 6.6 L11.9 10.9 M11.9 6.6 L7.6 10.9" stroke="#fff" stroke-width="1.3"/></svg>
<div style="left:225px;top:632.8px;width:401px;height:69.7px;border:2px solid #ff0000;border-radius:9px;box-sizing:border-box"></div>
<div style="left:0px;top:718px;width:999px;height:13px;background:#fff"></div>
<svg style="left:12px;top:54px;" width="16" height="16" viewBox="0 0 16 16"><rect x="1.5" y="3.5" width="12" height="11" fill="#f4f8fd" stroke="#c0a868"/><rect x="2" y="4" width="9" height="2" fill="#4a8ad8"/><path d="M13 6 Q13 13 5 13.5" fill="none" stroke="#e8c040" stroke-width="1.2"/><path d="M11.5 0 L12.7 2.8 L15.5 4 L12.7 5.2 L11.5 8 L10.3 5.2 L7.5 4 L10.3 2.8 Z" fill="#fff4a8" stroke="#dca01c" stroke-width="0.9" stroke-linejoin="round"/></svg>
<svg style="left:35px;top:59px;" width="5" height="3" viewBox="0 0 5 3"><path d="M0 0 L5 0 L2.5 3 Z" fill="#000"/></svg>
<svg style="left:48px;top:54px;" width="16" height="16" viewBox="0 0 16 16"><path d="M1.5 1.5 L12.5 1.5 L13.5 2.5 L13.5 14.5 L1.5 14.5 Z" fill="#e4e7ee" stroke="#c0c6d3"/><rect x="4" y="2" width="7" height="5" fill="#f4f6fa" stroke="#c0c6d3" stroke-width="0.8"/><rect x="4.5" y="10" width="6" height="4.5" fill="#c0c6d3"/></svg>
<svg style="left:70px;top:54px;" width="16" height="16" viewBox="0 0 16 16"><path d="M1.5 0.5 L9.5 0.5 L10.5 1.5 L10.5 10.5 L1.5 10.5 Z" fill="#e4e7ee" stroke="#c0c6d3"/><path d="M4.5 4.5 L13.5 4.5 L14.5 5.5 L14.5 15.5 L4.5 15.5 Z" fill="#e4e7ee" stroke="#c0c6d3"/><rect x="6.5" y="5" width="6" height="4" fill="#f4f6fa" stroke="#c0c6d3" stroke-width="0.8"/><rect x="7" y="11.5" width="5" height="4" fill="#c0c6d3"/></svg>
<svg style="left:92px;top:54px;" width="16" height="16" viewBox="0 0 16 16"><rect x="3.5" y="1.5" width="8" height="7" fill="#f4f6fa" stroke="#c0c6d3"/><path d="M5 4h5M5 6h5" stroke="#c0c6d3"/><rect x="0.5" y="8.5" width="14" height="6" rx="1" fill="#e4e7ee" stroke="#c0c6d3"/><rect x="2.5" y="11.5" width="10" height="2" fill="#f4f6fa"/></svg>
<div style="left:114px;top:52px;width:1px;height:20px;background:#b4b0a0"></div>
<div style="left:115px;top:52px;width:1px;height:20px;background:#c9d6f0"></div>
<svg style="left:123px;top:54px;" width="16" height="16" viewBox="0 0 16 16"><circle cx="8" cy="8.5" r="6.3" fill="#f2f4f8" stroke="#c0c6d3" stroke-width="1.4"/><path d="M8 8.5 L5 4.5 M8 8.5 L11.5 10" stroke="#a4abb8" stroke-width="1.5"/><path d="M8 3v1.5M8 12.5v1.5M2.8 8.5h1.5M11.8 8.5h1.5" stroke="#c0c6d3"/></svg>
<svg style="left:144px;top:59px;" width="5" height="3" viewBox="0 0 5 3"><path d="M0 0 L5 0 L2.5 3 Z" fill="#c9c3a8"/></svg>
<svg style="left:156px;top:54px;" width="16" height="16" viewBox="0 0 16 16"><path d="M3 2 Q7 0 10 2.5 L8.5 5.5 L6 4.5 Q4 4.5 2 6 Z" fill="#b4b4b4" stroke="#9a9a9a" stroke-width="0.7"/><path d="M7.5 5 L9.5 6 L15 14 L12.5 15.5 L7 7.5 Z" fill="#d9c0a4" stroke="#bfa080" stroke-width="0.7"/></svg>
<svg style="left:178px;top:59px;" width="5" height="3" viewBox="0 0 5 3"><path d="M0 0 L5 0 L2.5 3 Z" fill="#c9c3a8"/></svg>
<svg style="left:192px;top:54px;" width="16" height="16" viewBox="0 0 16 16"><path d="M2.5 0.5 L9.5 0.5 L12.5 3.5 L12.5 15.5 L2.5 15.5 Z" fill="#fff" stroke="#c4b48c"/><path d="M4 3.5h5M4 5.5h6" stroke="#5a88d8"/><text x="7.6" y="14" font-family="Liberation Serif, serif" font-weight="bold" font-size="7.5" text-anchor="middle" fill="#1c2e70">010</text></svg>
<div style="left:211.5px;top:54px;width:1px;height:16px;background:repeating-linear-gradient(180deg,#b4a684 0 2px,transparent 2px 4px)"></div>
<div style="left:212.5px;top:54.5px;width:1px;height:16px;background:repeating-linear-gradient(180deg,#dfe6f4 0 2px,transparent 2px 4px)"></div>
<svg style="left:220px;top:54px;" width="13" height="16" viewBox="0 0 13 16"><path d="M6 0.5 L11 0.5 L7.8 6 L11 6 L4 15.5 L6 8.5 L2.8 8.5 Z" fill="#fcc60a" stroke="#f4b400" stroke-width="0.5"/></svg>
<div style="left:238.5px;top:54px;width:1px;height:16px;background:repeating-linear-gradient(180deg,#b4a684 0 2px,transparent 2px 4px)"></div>
<div style="left:239.5px;top:54.5px;width:1px;height:16px;background:repeating-linear-gradient(180deg,#dfe6f4 0 2px,transparent 2px 4px)"></div>
<svg style="left:246px;top:54px;" width="16" height="16" viewBox="0 0 16 16"><path d="M3.5 6 Q1.5 13 8 13.5 Q13.5 13 13 8.5 L15 8.5 L12 5.5 L9 8.5 L11 8.5 Q11 11.5 8 11.5 Q4 11.5 5.5 6 Z" fill="#eceef2" stroke="#a4abb8" stroke-width="0.8"/><path d="M7 1 L12 3.8 L7 6.6 Z" fill="#a8c0a0" stroke="#90a890" stroke-width="0.6"/></svg>
<div style="left:266.5px;top:54px;width:1px;height:16px;background:repeating-linear-gradient(180deg,#b4a684 0 2px,transparent 2px 4px)"></div>
<div style="left:267.5px;top:54.5px;width:1px;height:16px;background:repeating-linear-gradient(180deg,#dfe6f4 0 2px,transparent 2px 4px)"></div>
<svg style="left:274px;top:54px;" width="16" height="16" viewBox="0 0 16 16"><circle cx="8" cy="8" r="4.6" fill="#e8f0fc" stroke="#4878c8" stroke-width="1.5"/><circle cx="8" cy="8" r="1.8" fill="#3060b8"/><path d="M2 2 L14 14" stroke="#203c98" stroke-width="1.6"/></svg>
<div style="left:293.5px;top:54px;width:1px;height:16px;background:repeating-linear-gradient(180deg,#b4a684 0 2px,transparent 2px 4px)"></div>
<div style="left:294.5px;top:54.5px;width:1px;height:16px;background:repeating-linear-gradient(180deg,#dfe6f4 0 2px,transparent 2px 4px)"></div>
<svg style="left:300px;top:54px;" width="16" height="16" viewBox="0 0 16 16"><path d="M13.5 1 L15 2.5 L8 11 L5.5 9.5 Z" fill="#e4e7ee" stroke="#c0c6d3" stroke-width="0.8"/><path d="M5.5 9.5 L8 11 Q6 15 1 14.5 Q4 13 5.5 9.5Z" fill="#c0c6d3"/></svg>
<svg style="left:322px;top:54px;" width="16" height="16" viewBox="0 0 16 16"><circle cx="5.5" cy="6" r="4.5" fill="#c8b898" stroke="#a89878" stroke-width="0.8"/><circle cx="11" cy="9" r="4.2" fill="#b8b0a0" stroke="#989080" stroke-width="0.8"/><path d="M3.5 5h1.5M6.5 5h1.5M4 8 Q5.5 9.5 7 8" stroke="#6a6050" stroke-width="0.9" fill="none"/></svg>
<svg style="left:344px;top:54px;" width="16" height="16" viewBox="0 0 16 16"><rect x="1.5" y="1.5" width="13" height="13" fill="#f2f4f8" stroke="#c0c6d3" stroke-width="1.3"/><rect x="4.5" y="4.5" width="7" height="7" fill="#e4e8ee" stroke="#a4abb8" stroke-width="0.9"/><path d="M6 7h4M6 9h4" stroke="#a4abb8" stroke-width="0.8"/></svg>
<svg style="left:367px;top:54px;" width="16" height="16" viewBox="0 0 16 16"><rect x="1" y="1" width="14" height="14" fill="#e8ebf1" stroke="#c0c6d3" stroke-width="1"/><path d="M11.5 3.5 L6.5 3.5 Q4 3.5 4 6 Q4 8.5 7 8.5 L7 13 M7 3.5 V13 M10 3.5 V13" fill="none" stroke="#a8b0be" stroke-width="1.7"/></svg>
<div style="left:387.5px;top:54px;width:1px;height:16px;background:repeating-linear-gradient(180deg,#b4a684 0 2px,transparent 2px 4px)"></div>
<div style="left:388.5px;top:54.5px;width:1px;height:16px;background:repeating-linear-gradient(180deg,#dfe6f4 0 2px,transparent 2px 4px)"></div>
<svg style="left:395px;top:54px;" width="16" height="16" viewBox="0 0 16 16"><path d="M2.5 5.5 L4 3 L10 3 L11.5 5.5" fill="#f0c8b0" stroke="#c89070" stroke-width="0.8"/><rect x="1.5" y="5.5" width="12" height="9.5" rx="1" fill="#cfe0f8" stroke="#3c5cc8" stroke-width="1.2"/><rect x="2.5" y="6.5" width="10" height="3" fill="#e8f0fc"/><path d="M9.8 8.6 Q9 7.6 7.7 7.6 Q5.6 7.6 5.6 10.2 Q5.6 12.8 7.7 12.8 Q9 12.8 9.8 11.8" fill="none" stroke="#2444a0" stroke-width="1.7"/><path d="M12 -0.3 L13.2 2.6 L16 3.8 L13.2 5 L12 7.9 L10.8 5 L8 3.8 L10.8 2.6 Z" fill="#fff4a8" stroke="#dca01c" stroke-width="0.9" stroke-linejoin="round"/></svg>
<svg style="left:416px;top:59px;" width="5" height="3" viewBox="0 0 5 3"><path d="M0 0 L5 0 L2.5 3 Z" fill="#000"/></svg>
<svg style="left:429px;top:54px;" width="16" height="16" viewBox="0 0 16 16"><path d="M3.5 14.5 L3.5 4.5 Q3.5 3.5 4.5 3.5 L7.5 3.5 L9 5 L13.5 5 Q14.5 5 14.5 6 L14.5 14.5 Z" fill="#fce4a8" stroke="#e0a040"/><rect x="1.5" y="6.5" width="6" height="8" rx="1" fill="#c4d4f0" stroke="#8098d0" stroke-width="0.9"/><path d="M5.8 9.6 Q5.4 9 4.6 9 Q3.4 9 3.4 10.6 Q3.4 12.2 4.6 12.2 Q5.4 12.2 5.8 11.6" fill="none" stroke="#fff" stroke-width="1.1"/><path d="M12 -0.3 L13.2 2.6 L16 3.8 L13.2 5 L12 7.9 L10.8 5 L8 3.8 L10.8 2.6 Z" fill="#fff4a8" stroke="#dca01c" stroke-width="0.9" stroke-linejoin="round"/></svg>
<svg style="left:451px;top:59px;" width="5" height="3" viewBox="0 0 5 3"><path d="M0 0 L5 0 L2.5 3 Z" fill="#000"/></svg>
<svg style="left:465px;top:54px;" width="16" height="16" viewBox="0 0 16 16"><path d="M2.5 2.5 L12.5 2.5 L12.5 15.5 L2.5 15.5 Z" fill="#f4f4f0" stroke="#c4b48c"/><path d="M10 8 Q9.2 6.9 7.7 6.9 Q5.3 6.9 5.3 9.8 Q5.3 12.7 7.7 12.7 Q9.2 12.7 10 11.6" fill="none" stroke="#2438b8" stroke-width="1.9"/><path d="M12 -0.3 L13.2 2.6 L16 3.8 L13.2 5 L12 7.9 L10.8 5 L8 3.8 L10.8 2.6 Z" fill="#fff4a8" stroke="#dca01c" stroke-width="0.9" stroke-linejoin="round"/></svg>
<svg style="left:487px;top:59px;" width="5" height="3" viewBox="0 0 5 3"><path d="M0 0 L5 0 L2.5 3 Z" fill="#000"/></svg>
<svg style="left:499px;top:54px;" width="16" height="16" viewBox="0 0 16 16"><circle cx="7.8" cy="8.8" r="6.6" fill="#2f9440" stroke="#1c7028"/><circle cx="7.8" cy="7" r="4.6" fill="#6cc070" opacity=".45"/><path d="M10.6 6.8 Q9.7 5.4 7.8 5.4 Q4.8 5.4 4.8 8.8 Q4.8 12.2 7.8 12.2 Q9.7 12.2 10.6 10.8" fill="none" stroke="#fff" stroke-width="2"/><path d="M12 -0.3 L13.2 2.6 L16 3.8 L13.2 5 L12 7.9 L10.8 5 L8 3.8 L10.8 2.6 Z" fill="#fff4a8" stroke="#dca01c" stroke-width="0.9" stroke-linejoin="round"/></svg>
<svg style="left:521px;top:59px;" width="5" height="3" viewBox="0 0 5 3"><path d="M0 0 L5 0 L2.5 3 Z" fill="#000"/></svg>
<div style="left:531.5px;top:54px;width:1px;height:16px;background:repeating-linear-gradient(180deg,#b4a684 0 2px,transparent 2px 4px)"></div>
<div style="left:532.5px;top:54.5px;width:1px;height:16px;background:repeating-linear-gradient(180deg,#dfe6f4 0 2px,transparent 2px 4px)"></div>
<svg style="left:539px;top:54px;" width="16" height="16" viewBox="0 0 16 16"><path d="M3 2 L6 5 M13 2 L10 5 M1 8 H5 M11 8 H15 M2.5 14 L5.5 11 M13.5 14 L10.5 11 M8 1v3" stroke="#2a4a38" stroke-width="1.1"/><ellipse cx="8" cy="9" rx="3.8" ry="5" fill="#78b068" stroke="#2a5a38"/><ellipse cx="7" cy="7.5" rx="1.8" ry="2.6" fill="#b8dca8"/></svg>
<svg style="left:561px;top:59px;" width="5" height="3" viewBox="0 0 5 3"><path d="M0 0 L5 0 L2.5 3 Z" fill="#000"/></svg>
<svg style="left:573px;top:54px;" width="16" height="16" viewBox="0 0 16 16"><circle cx="8" cy="8" r="7.2" fill="#2e9a38" stroke="#1a7026"/><circle cx="8" cy="5.8" r="5" fill="#74c870" opacity=".55"/><path d="M5.8 3.8 L11.8 8 L5.8 12.2 Z" fill="#fff"/></svg>
<svg style="left:596px;top:59px;" width="5" height="3" viewBox="0 0 5 3"><path d="M0 0 L5 0 L2.5 3 Z" fill="#000"/></svg>
<svg style="left:607px;top:54px;" width="17" height="16" viewBox="0 0 17 16"><circle cx="6.5" cy="6.5" r="6" fill="#2e9a38" stroke="#1a7026"/><circle cx="6.5" cy="4.8" r="4" fill="#74c870" opacity=".55"/><path d="M4.8 3.2 L9.6 6.5 L4.8 9.8 Z" fill="#fff"/><rect x="7.5" y="10" width="8" height="5.5" rx="1" fill="#e83838" stroke="#a81818" stroke-width="0.8"/><path d="M9.8 10 V8.6 H13.2 V10" fill="none" stroke="#a81818" stroke-width="1"/><rect x="7.5" y="12" width="8" height="1" fill="#f8b0a8"/></svg>
<svg style="left:630px;top:59px;" width="5" height="3" viewBox="0 0 5 3"><path d="M0 0 L5 0 L2.5 3 Z" fill="#000"/></svg>
<div style="left:641.5px;top:54px;width:1px;height:16px;background:repeating-linear-gradient(180deg,#b4a684 0 2px,transparent 2px 4px)"></div>
<div style="left:642.5px;top:54.5px;width:1px;height:16px;background:repeating-linear-gradient(180deg,#dfe6f4 0 2px,transparent 2px 4px)"></div>
<svg style="left:646px;top:54px;" width="17" height="16" viewBox="0 0 17 16"><path d="M1.5 14.5 L1.5 5.5 Q1.5 4.5 2.5 4.5 L5 4.5 L6.5 6 L12 6 Q13 6 13 7 L13 8" fill="#fbe0a0" stroke="#c8902c"/><path d="M1.5 14.5 L4.5 8.5 L16 8.5 L13 14.5 Z" fill="#fdeeb6" stroke="#c8902c" stroke-linejoin="round"/><circle cx="9" cy="3.5" r="3" fill="#8058b8"/><circle cx="13" cy="5" r="3" fill="#48a048"/></svg>
<svg style="left:668px;top:54px;" width="17" height="16" viewBox="0 0 17 16"><path d="M1.5 14.5 L1.5 5.5 Q1.5 4.5 2.5 4.5 L5 4.5 L6.5 6 L12 6 Q13 6 13 7 L13 8" fill="#fbe0a0" stroke="#c8902c"/><rect x="7" y="2.5" width="6" height="6" fill="#f4f6fc" stroke="#8898c0" stroke-width="0.9"/><path d="M1.5 14.5 L4.5 8.5 L16 8.5 L13 14.5 Z" fill="#fdeeb6" stroke="#c8902c" stroke-linejoin="round"/></svg>
<svg style="left:692px;top:54px;" width="17" height="16" viewBox="0 0 17 16"><path d="M0.8 15 L4.5 8 L8.5 11.5 Z" fill="#fdf6c8" stroke="#ecd890" stroke-width="0.6"/><ellipse cx="6.6" cy="9" rx="2.6" ry="3.4" transform="rotate(-45 6.6 9)" fill="#9c9c9c" stroke="#787878" stroke-width="0.8"/><path d="M6 6.5 L11.5 1 Q14.5 0.5 15.3 3.8 L9.8 9.6 Z" fill="#fbd660" stroke="#c89830" stroke-width="0.9"/><circle cx="12.4" cy="3.8" r="1.1" fill="#7a5a20"/></svg>
<svg style="left:715px;top:59px;" width="5" height="3" viewBox="0 0 5 3"><path d="M0 0 L5 0 L2.5 3 Z" fill="#000"/></svg>
<div style="left:725.5px;top:54px;width:1px;height:16px;background:repeating-linear-gradient(180deg,#b4a684 0 2px,transparent 2px 4px)"></div>
<div style="left:726.5px;top:54.5px;width:1px;height:16px;background:repeating-linear-gradient(180deg,#dfe6f4 0 2px,transparent 2px 4px)"></div>
<svg style="left:733px;top:54px;" width="16" height="16" viewBox="0 0 16 16"><rect x="6.5" y="3.5" width="8" height="11" fill="#f2f4f8" stroke="#c0c6d3"/><path d="M8 6h5M8 8h5M8 10h5M8 12h4" stroke="#c0c6d3" stroke-width="0.9"/><path d="M3.5 1 L6.5 1 L6.5 7 L9 7 L5 12 L1 7 L3.5 7 Z" fill="#e4e0cc" stroke="#bdb8a0" stroke-width="0.8"/></svg>
<svg style="left:755px;top:59px;" width="5" height="3" viewBox="0 0 5 3"><path d="M0 0 L5 0 L2.5 3 Z" fill="#c9c3a8"/></svg>
<svg style="left:767px;top:54px;" width="16" height="16" viewBox="0 0 16 16"><rect x="6.5" y="1.5" width="8" height="11" fill="#f2f4f8" stroke="#c0c6d3"/><path d="M8 4h5M8 6h5M8 8h5M8 10h4" stroke="#c0c6d3" stroke-width="0.9"/><path d="M3.5 15 L6.5 15 L6.5 9 L9 9 L5 4 L1 9 L3.5 9 Z" fill="#e4e0cc" stroke="#bdb8a0" stroke-width="0.8"/></svg>
<svg style="left:789px;top:59px;" width="5" height="3" viewBox="0 0 5 3"><path d="M0 0 L5 0 L2.5 3 Z" fill="#c9c3a8"/></svg>
<svg style="left:801px;top:54px;" width="16" height="16" viewBox="0 0 16 16"><path d="M1 8.5 L7 3 L7 6 L15 6 L15 11 L7 11 L7 14 Z" fill="#e8e6da" stroke="#c4c0b0" stroke-width="0.9"/><path d="M0.5 2.5 L4.5 6.5 M2.5 1 v3 M0.5 4 h3" stroke="#a4abb8" stroke-width="0.9"/></svg>
<svg style="left:824px;top:54px;" width="16" height="16" viewBox="0 0 16 16"><path d="M1 8 L7.5 2 L7.5 5 L14.5 5 L14.5 11 L7.5 11 L7.5 14 Z" fill="#fdeeb8" stroke="#dc9c24" stroke-width="1.2" stroke-linejoin="round"/></svg>
<svg style="left:846px;top:59px;" width="5" height="3" viewBox="0 0 5 3"><path d="M0 0 L5 0 L2.5 3 Z" fill="#000"/></svg>
<svg style="left:860px;top:54px;" width="16" height="16" viewBox="0 0 16 16"><path d="M15 8 L8.5 2 L8.5 5 L1.5 5 L1.5 11 L8.5 11 L8.5 14 Z" fill="#ecebe2" stroke="#cac6b6" stroke-width="1" stroke-linejoin="round"/></svg>
<svg style="left:882px;top:59px;" width="5" height="3" viewBox="0 0 5 3"><path d="M0 0 L5 0 L2.5 3 Z" fill="#c9c3a8"/></svg>
<div style="left:894px;top:52px;width:1px;height:20px;background:#b4b0a0"></div>
<div style="left:895px;top:52px;width:1px;height:20px;background:#c9d6f0"></div>
<svg style="left:901px;top:54px;" width="16" height="16" viewBox="0 0 16 16"><rect x="1.5" y="4.5" width="11" height="9" fill="#f4f4f0" stroke="#c0c6d3"/><rect x="2" y="5" width="10" height="2" fill="#d4d8e0"/><path d="M9 7 L13.5 2 M11 1.5 L14.5 4.5 M9 7 L7.5 9" stroke="#a4abb8" stroke-width="1.2"/></svg>
<div style="left:672px;top:79px;width:138px;height:19px;background:#fff;border:1px solid #a8bce0;box-sizing:border-box;border-radius:1px"></div>
<div style="left:816px;top:75px;width:2px;height:25px;background:repeating-linear-gradient(180deg,#8c8c84 0 2px,transparent 2px 4px)"></div>
<svg style="left:833px;top:82px;" width="16" height="16" viewBox="0 0 16 16"><rect x="1.5" y="3.5" width="11" height="11" fill="#fff" stroke="#8a7848"/><rect x="2" y="4" width="10" height="2.4" fill="#5080d0"/><path d="M5.5 6.5 V14.5 M5.5 10 H12.5" stroke="#8a7848"/><path d="M12 -0.3 L13.2 2.6 L16 3.8 L13.2 5 L12 7.9 L10.8 5 L8 3.8 L10.8 2.6 Z" fill="#fff4a8" stroke="#dca01c" stroke-width="0.9" stroke-linejoin="round"/></svg>
<div style="left:854px;top:80px;width:1px;height:20px;background:#c9c5b5"></div>
<div style="left:858px;top:78px;width:63px;height:23px;background:#fff;border:1px solid #93a9d2;border-radius:3px;box-sizing:border-box"></div>
<svg style="left:864px;top:82px;" width="16" height="16" viewBox="0 0 16 16"><rect x="0.5" y="0.5" width="11" height="11" fill="#fff" stroke="#6a7898"/><rect x="1" y="1" width="10" height="2.4" fill="#5080d0"/><path d="M4.5 3.5 V11.5 M4.5 7 H11.5" stroke="#6a7898"/><rect x="6.5" y="6.5" width="8" height="8" rx="1" fill="#5a90e0" stroke="#2850b0"/><path d="M12.3 9 Q11.7 8.3 10.7 8.3 Q9 8.3 9 10.5 Q9 12.7 10.7 12.7 Q11.7 12.7 12.3 12" fill="none" stroke="#fff" stroke-width="1.3"/></svg>
<svg style="left:924px;top:81px;" width="17" height="17" viewBox="0 0 17 17"><path d="M3 2 L6 5 M13 2 L10 5 M1 8 H5 M11 8 H15 M2.5 14 L5.5 11 M13.5 14 L10.5 11 M8 1v3" stroke="#2a4a38" stroke-width="1.1"/><ellipse cx="8" cy="9" rx="3.8" ry="5" fill="#78b068" stroke="#2a5a38"/><ellipse cx="7" cy="7.5" rx="1.8" ry="2.6" fill="#b8dca8"/></svg>
<span class="t" style="left:25px;top:10px;font:bold 14px/14px 'Liberation Sans', sans-serif;color:#fff;transform:scaleX(0.8878);transform-origin:0 0;text-shadow:1px 1px 1px #0a2f9c;">C/C++ - G6CANCDC/Sources/Application.c - Kinetis Design Studio - C:\Documents and Settings\Administrador\workspace.kds20</span>
<span class="t" style="left:8.5px;top:34px;font:normal 11px/11px 'Liberation Sans', sans-serif;color:#000;letter-spacing:-0.309px;">File</span>
<span class="t" style="left:35.5px;top:34px;font:normal 11px/11px 'Liberation Sans', sans-serif;color:#000;letter-spacing:-0.117px;">Edit</span>
<span class="t" style="left:64.5px;top:34px;font:normal 11px/11px 'Liberation Sans', sans-serif;color:#000;letter-spacing:-0.227px;">Source</span>
<span class="t" style="left:108.5px;top:34px;font:normal 11px/11px 'Liberation Sans', sans-serif;color:#000;letter-spacing:-0.010px;">Refactor</span>
<span class="t" style="left:160.5px;top:34px;font:normal 11px/11px 'Liberation Sans', sans-serif;color:#000;letter-spacing:-0.115px;">Navigate</span>
<span class="t" style="left:213.5px;top:34px;font:normal 11px/11px 'Liberation Sans', sans-serif;color:#000;letter-spacing:-0.227px;">Search</span>
<span class="t" style="left:257.5px;top:34px;font:normal 11px/11px 'Liberation Sans', sans-serif;color:#000;letter-spacing:0.036px;">Project</span>
<span class="t" style="left:302.0px;top:34px;font:normal 11px/11px 'Liberation Sans', sans-serif;color:#000;letter-spacing:-0.211px;">Processor Expert</span>
<span class="t" style="left:393.5px;top:34px;font:normal 11px/11px 'Liberation Sans', sans-serif;color:#000;letter-spacing:-0.229px;">Run</span>
<span class="t" style="left:424.0px;top:34px;font:normal 11px/11px 'Liberation Sans', sans-serif;color:#000;letter-spacing:-0.271px;">Window</span>
<span class="t" style="left:472.0px;top:34px;font:normal 11px/11px 'Liberation Sans', sans-serif;color:#000;letter-spacing:-0.156px;">Help</span>
<span class="t" style="left:33px;top:118px;font:normal 12px/12px 'Liberation Sans', sans-serif;color:#000;letter-spacing:-0.086px;">Project Explorer</span>
<span class="t" style="left:57px;top:165px;font:normal 11px/11px 'Liberation Sans', sans-serif;color:#000;letter-spacing:-0.941px;">ATPCANMON</span>
<span class="t" style="left:57px;top:182px;font:normal 11px/11px 'Liberation Sans', sans-serif;color:#000;letter-spacing:-0.727px;">ATPJCAN01</span>
<span class="t" style="left:57px;top:199px;font:normal 11px/11px 'Liberation Sans', sans-serif;color:#000;letter-spacing:-1.092px;">G6CANCDC</span>
<span class="t" style="left:32.5px;top:437px;font:normal 12px/12px 'Liberation Sans', sans-serif;color:#000;letter-spacing:-0.193px;">Components - G6CAN...</span>
<span class="t" style="left:56.7px;top:484px;font:normal 11px/11px 'Liberation Sans', sans-serif;color:#000;letter-spacing:-0.212px;">Generator_Configurations</span>
<span class="t" style="left:75px;top:501px;font:normal 11px/11px 'Liberation Sans', sans-serif;color:#000;letter-spacing:-0.894px;">FLASH</span>
<span class="t" style="left:56.7px;top:518px;font:normal 11px/11px 'Liberation Sans', sans-serif;color:#000;letter-spacing:-0.802px;">OSs</span>
<span class="t" style="left:56.7px;top:535px;font:normal 11px/11px 'Liberation Sans', sans-serif;color:#000;letter-spacing:-0.403px;">Processors</span>
<span class="t" style="left:75px;top:552px;font:normal 11px/11px 'Liberation Sans', sans-serif;color:#000;letter-spacing:-0.707px;">Cpu:MK21FN1M0VMC12</span>
<span class="t" style="left:56.7px;top:569px;font:normal 11px/11px 'Liberation Sans', sans-serif;color:#000;letter-spacing:-0.388px;">Components</span>
<span class="t" style="left:56.7px;top:586px;font:normal 11px/11px 'Liberation Sans', sans-serif;color:#000;letter-spacing:-1.078px;">PDD</span>
<span class="t" style="left:281px;top:118px;font:normal 12px/12px 'Liberation Sans', sans-serif;color:#000;letter-spacing:-0.042px;">Application.c</span>
<span class="t" style="left:280.3px;top:593px;font:normal 12px/12px 'Liberation Sans', sans-serif;color:#000;letter-spacing:-0.398px;">Problems</span>
<span class="t" style="left:378px;top:593px;font:normal 12px/12px 'Liberation Sans', sans-serif;color:#6e6e6e;letter-spacing:-0.537px;">Tasks</span>
<span class="t" style="left:435px;top:593px;font:normal 12px/12px 'Liberation Sans', sans-serif;color:#6e6e6e;letter-spacing:-0.433px;">Console</span>
<span class="t" style="left:506px;top:593px;font:normal 12px/12px 'Liberation Sans', sans-serif;color:#6e6e6e;letter-spacing:-0.270px;">Properties</span>
<span class="t" style="left:264px;top:615px;font:normal 11px/11px 'Liberation Sans', sans-serif;color:#000;letter-spacing:-0.068px;">1 error, 0 warnings, 0 others</span>
<span class="t" style="left:275px;top:634px;font:normal 11px/11px 'Liberation Sans', sans-serif;color:#000;letter-spacing:-0.276px;">Description</span>
<span class="t" style="left:555.5px;top:634px;font:normal 11px/11px 'Liberation Sans', sans-serif;color:#000;letter-spacing:-0.260px;">Resource</span>
<span class="t" style="left:628.5px;top:634px;font:normal 11px/11px 'Liberation Sans', sans-serif;color:#000;letter-spacing:-0.035px;">Path</span>
<span class="t" style="left:725.5px;top:634px;font:normal 11px/11px 'Liberation Sans', sans-serif;color:#000;letter-spacing:-0.199px;">Location</span>
<span class="t" style="left:799px;top:634px;font:normal 11px/11px 'Liberation Sans', sans-serif;color:#000;letter-spacing:0.035px;">Type</span>
<span class="t" style="left:304.5px;top:652px;font:normal 11px/11px 'Liberation Sans', sans-serif;color:#000;letter-spacing:-0.119px;">Errors (1 item)</span>
<span class="t" style="left:323.5px;top:669px;font:normal 11px/11px 'Liberation Sans', sans-serif;color:#000;letter-spacing:-0.031px;">make: *** No rule to make target `all'.  Stop.</span>
<span class="t" style="left:552.5px;top:669px;font:normal 11px/11px 'Liberation Sans', sans-serif;color:#000;letter-spacing:-1.029px;">G6CANCDC</span>
<span class="t" style="left:795px;top:669px;font:normal 11px/11px 'Liberation Sans', sans-serif;color:#000;letter-spacing:-0.216px;">C/C++ Problem</span>
<span class="t" style="left:678px;top:83px;font:normal 11px/11px 'Liberation Sans', sans-serif;color:#9a9a9a;letter-spacing:-0.503px;">Quick Access</span>
<span class="t" style="left:881.5px;top:85px;font:normal 12px/12px 'Liberation Sans', sans-serif;color:#000;letter-spacing:-0.438px;">C/C++</span>
<span class="t" style="left:944px;top:85px;font:normal 11px/11px 'Liberation Sans', sans-serif;color:#000;letter-spacing:-0.284px;">Debug</span>
<div style="left:293px;top:139px;width:656px;height:414px;overflow:hidden"><span class="t" style="left:203.3px;top:19px;font:bold 13px/13px 'Liberation Mono', monospace;color:#7f0055;">if</span><span class="t" style="left:218.9px;top:19px;font:normal 13px/13px 'Liberation Mono', monospace;color:#262626;">(  mask_filter   ==  0  ){</span><span class="t" style="left:250.1px;top:53px;font:bold 13px/13px 'Liberation Mono', monospace;color:#7f0055;">if</span><span class="t" style="left:265.7px;top:53px;font:normal 13px/13px 'Liberation Mono', monospace;color:#262626;">( ! rx_bufok ){</span><span class="t" style="left:420.3px;top:70px;font:normal 13px/13px 'Liberation Mono', monospace;color:#262626;">tout2=0;</span><span class="t" style="left:420.3px;top:88px;font:bold 13px/13px 'Liberation Mono', monospace;color:#7f0055;">for</span><span class="t" style="left:443.7px;top:88px;font:normal 13px/13px 'Liberation Mono', monospace;color:#262626;">(i=0;i&lt; Frame.</span><span class="t" style="left:552.9px;top:88px;font:normal 13px/13px 'Liberation Mono', monospace;color:#0000c0;">Length</span><span class="t" style="left:607.5px;top:88px;font:normal 13px/13px 'Liberation Mono', monospace;color:#262626;">*2 ;i++</span><span class="t" style="left:443.7px;top:122px;font:normal 13px/13px 'Liberation Mono', monospace;color:#262626;">htc =   bytetochar(  Frame.</span><span class="t" style="left:654.3px;top:122px;font:normal 13px/13px 'Liberation Mono', monospace;color:#0000c0;">Data</span><span class="t" style="left:443.7px;top:139px;font:normal 13px/13px 'Liberation Mono', monospace;color:#262626;">can_rxbuf[tout2++]=(</span><span class="t" style="left:599.7px;top:139px;font:normal 13px/13px 'Liberation Mono', monospace;color:#005032;">byte</span><span class="t" style="left:630.9px;top:139px;font:normal 13px/13px 'Liberation Mono', monospace;color:#262626;">)(htc</span><span class="t" style="left:443.7px;top:156px;font:normal 13px/13px 'Liberation Mono', monospace;color:#262626;">can_rxbuf[tout2++]=(</span><span class="t" style="left:599.7px;top:156px;font:normal 13px/13px 'Liberation Mono', monospace;color:#005032;">byte</span><span class="t" style="left:630.9px;top:156px;font:normal 13px/13px 'Liberation Mono', monospace;color:#262626;">)htc</span><span class="t" style="left:459.3px;top:173px;font:normal 13px/13px 'Liberation Mono', monospace;color:#262626;">}</span><span class="t" style="left:435.9px;top:190px;font:normal 13px/13px 'Liberation Mono', monospace;color:#262626;">can_rxbuf[i++] =</span><span class="t" style="left:568.5px;top:190px;font:normal 13px/13px 'Liberation Mono', monospace;color:#2a00ff;">'\r'</span><span class="t" style="left:599.7px;top:190px;font:normal 13px/13px 'Liberation Mono', monospace;color:#262626;">;</span><span class="t" style="left:435.9px;top:208px;font:normal 13px/13px 'Liberation Mono', monospace;color:#262626;">can_rxbuf[i++] =</span><span class="t" style="left:568.5px;top:208px;font:normal 13px/13px 'Liberation Mono', monospace;color:#2a00ff;">'\n'</span><span class="t" style="left:599.7px;top:208px;font:normal 13px/13px 'Liberation Mono', monospace;color:#262626;">;</span><span class="t" style="left:435.9px;top:225px;font:normal 13px/13px 'Liberation Mono', monospace;color:#262626;">can_rxbuf[i]   =</span><span class="t" style="left:568.5px;top:225px;font:normal 13px/13px 'Liberation Mono', monospace;color:#2a00ff;">'\0'</span><span class="t" style="left:599.7px;top:225px;font:normal 13px/13px 'Liberation Mono', monospace;color:#262626;">;</span><span class="t" style="left:420.3px;top:259px;font:bold 13px/13px 'Liberation Mono', monospace;color:#7f0055;">for</span><span class="t" style="left:443.7px;top:259px;font:normal 13px/13px 'Liberation Mono', monospace;color:#262626;">( tout2=0; tout2&lt; i;tout2++</span><span class="t" style="left:435.9px;top:276px;font:normal 13px/13px 'Liberation Mono', monospace;color:#262626;">ou_buffer[ tout2] = can_rxbuf</span><span class="t" style="left:428.1px;top:293px;font:normal 13px/13px 'Liberation Mono', monospace;color:#262626;">}</span><span class="t" style="left:435.9px;top:310px;font:normal 13px/13px 'Liberation Mono', monospace;color:#262626;">rx_bufok = TRUE;</span><span class="t" style="left:250.1px;top:345px;font:normal 13px/13px 'Liberation Mono', monospace;color:#262626;">}</span><span class="t" style="left:203.3px;top:379px;font:normal 13px/13px 'Liberation Mono', monospace;color:#262626;">}</span><span class="t" style="left:211.1px;top:379px;font:bold 13px/13px 'Liberation Mono', monospace;color:#7f0055;">else</span><span class="t" style="left:265.7px;top:379px;font:bold 13px/13px 'Liberation Mono', monospace;color:#7f0055;">if</span><span class="t" style="left:281.3px;top:379px;font:normal 13px/13px 'Liberation Mono', monospace;color:#262626;">( Frame.</span><span class="t" style="left:343.7px;top:379px;font:normal 13px/13px 'Liberation Mono', monospace;color:#0000c0;">MessageID</span><span class="t" style="left:429.5px;top:379px;font:normal 13px/13px 'Liberation Mono', monospace;color:#262626;">==  mask_filter  ){</span></div>
</div>
</body></html>
